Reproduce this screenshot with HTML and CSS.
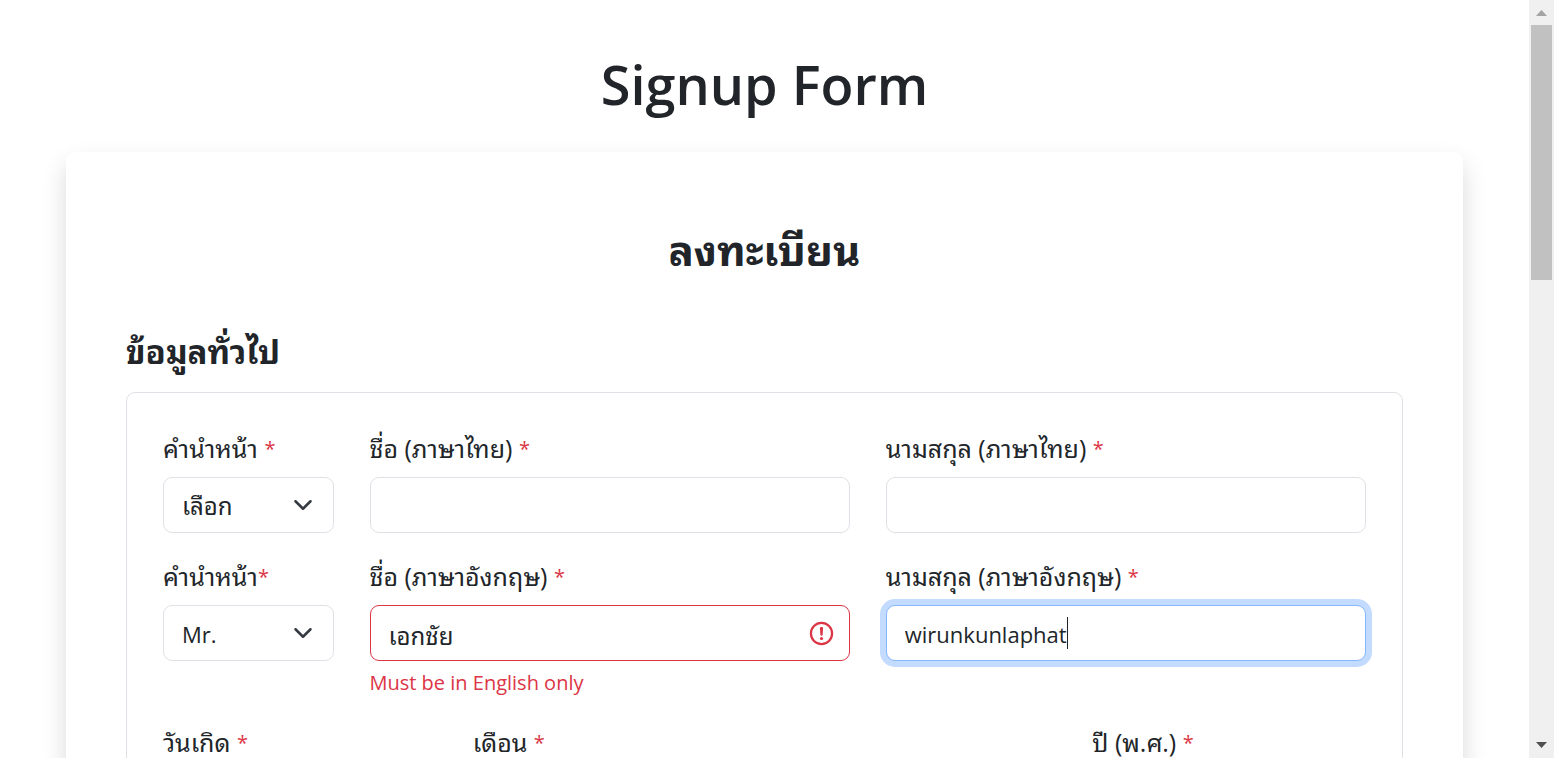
FILE: index.html
```html
<!DOCTYPE html>
<html lang="th">
<head>
<meta charset="utf-8">
<meta name="viewport" content="width=device-width, initial-scale=1">
<title>Signup Form</title>
<link rel="stylesheet" href="styles.css">
</head>
<body>
<div class="viewport">
  <main class="page">
    <h1 class="page-title">Signup Form</h1>
    <form class="card">
      <h2 class="card-title">ลงทะเบียน</h2>
      <h3 class="section-title">ข้อมูลทั่วไป</h3>
      <div class="panel">
        <div class="field span-2">
          <label for="prefix-th">คำนำหน้า <span class="req">*</span></label>
          <div class="control">
            <select id="prefix-th" class="input thai"><option>เลือก</option></select>
            <svg class="chevron" viewBox="0 0 16 16" aria-hidden="true"><path d="m2 5 6 6 6-6"/></svg>
          </div>
        </div>
        <div class="field span-5">
          <label for="first-th">ชื่อ (ภาษาไทย) <span class="req">*</span></label>
          <input id="first-th" class="input thai" type="text">
        </div>
        <div class="field span-5">
          <label for="last-th">นามสกุล (ภาษาไทย) <span class="req">*</span></label>
          <input id="last-th" class="input thai" type="text">
        </div>

        <div class="field span-2">
          <label for="prefix-en">คำนำหน้า<span class="req">*</span></label>
          <div class="control">
            <select id="prefix-en" class="input"><option>Mr.</option></select>
            <svg class="chevron" viewBox="0 0 16 16" aria-hidden="true"><path d="m2 5 6 6 6-6"/></svg>
          </div>
        </div>
        <div class="field span-5">
          <label for="first-en">ชื่อ (ภาษาอังกฤษ) <span class="req">*</span></label>
          <div class="control">
            <input id="first-en" class="input thai invalid" type="text" value="เอกชัย" aria-invalid="true" aria-describedby="first-en-error">
            <svg class="alert" viewBox="0 0 12 12" aria-hidden="true"><circle cx="6" cy="6" r="4.7"/><path d="M5.8 3.6h.4L6 6.500z"/><circle class="dot" cx="6" cy="8.2" r=".7"/></svg>
          </div>
          <p id="first-en-error" class="feedback">Must be in English only</p>
        </div>
        <div class="field span-5">
          <label for="last-en">นามสกุล (ภาษาอังกฤษ) <span class="req">*</span></label>
          <div class="control">
            <input id="last-en" class="input focused" type="text" value="wirunkunlaphat">
            <span class="caret"></span>
          </div>
        </div>

        <div class="field span-3">
          <label for="day">วันเกิด <span class="req">*</span></label>
          <select id="day" class="input"></select>
        </div>
        <div class="field span-6">
          <label for="month">เดือน <span class="req">*</span></label>
          <select id="month" class="input"></select>
        </div>
        <div class="field span-3">
          <label for="year">ปี (พ.ศ.) <span class="req">*</span></label>
          <select id="year" class="input"></select>
        </div>
      </div>
    </form>
  </main>
  <div class="scrollbar" aria-hidden="true">
    <svg class="arrow up" viewBox="0 0 25 25"><path d="M7 16 12.500 10 18 16z"/></svg>
    <div class="track"><div class="thumb"></div></div>
    <svg class="arrow down" viewBox="0 0 25 25"><path d="M7 9 12.500 15 18 9z"/></svg>
  </div>
</div>
</body>
</html>
```
FILE: styles.css
```css
* { box-sizing: border-box; }

body {
  margin: 0;
  color: #212529;
  background: #fff;
  font-family: "Segoe UI", "Open Sans", "Leelawadee UI", "Noto Sans Thai Looped", "Loma", "Waree", "Garuda", sans-serif;
  font-size: 22px;
  line-height: 36px;
}

h1, h2, h3, p { margin: 0; }

.viewport {
  display: flex;
  height: 100vh;
  overflow: hidden;
}

.page {
  flex: 1;
  min-width: 0;
  padding: 44px 66px 0;
}

.page-title {
  margin-bottom: 28px;
  font-size: 54px;
  font-weight: 600;
  line-height: 80px;
  text-align: center;
}

.card {
  padding: 70px 60px;
  border-radius: 9px;
  box-shadow: 0 12px 24px rgba(0, 0, 0, 0.15);
}

.card-title {
  margin-bottom: 54px;
  font-size: 42px;
  font-weight: 700;
  line-height: 56px;
  text-align: center;
}

.section-title {
  margin-bottom: 20px;
  font-size: 33px;
  font-weight: 700;
  line-height: 40px;
}

.panel {
  display: grid;
  grid-template-columns: repeat(12, minmax(0, 1fr));
  gap: 24px 36px;
  padding: 36px;
  border: 1px solid #dee2e6;
  border-radius: 9px;
}

.span-2 { grid-column: span 2; }
.span-3 { grid-column: span 3; }
.span-5 { grid-column: span 5; }
.span-6 { grid-column: span 6; }

.field label {
  display: block;
  height: 36px;
  margin-bottom: 12px;
  font-size: 25px;
  line-height: 38px;
  white-space: nowrap;
}

.req {
  color: #dc3545;
  font-size: 20px;
  line-height: 20px;
  vertical-align: 2px;
}

.control { position: relative; }

.input {
  display: block;
  width: 100%;
  height: 56px;
  padding: 2px 18px 0;
  border: 1px solid #dee2e6;
  border-radius: 9px;
  outline: 0;
  appearance: none;
  color: inherit;
  background: #fff;
  font: inherit;
}

.thai { font-size: 24px; }

.invalid { border-color: #dc3545; }

.focused {
  border-color: #86b7fe;
  box-shadow: 0 0 0 6px #c2dbfe;
}

.chevron {
  position: absolute;
  top: 18px;
  right: 21px;
  width: 20px;
  height: 20px;
  fill: none;
  stroke: #343a40;
  stroke-width: 2;
  stroke-linecap: round;
  stroke-linejoin: round;
  pointer-events: none;
}

.alert {
  position: absolute;
  top: 15px;
  right: 15px;
  width: 27px;
  height: 27px;
  fill: none;
  stroke: #dc3545;
  stroke-linejoin: round;
}

.alert .dot {
  fill: #dc3545;
  stroke: none;
}

.caret {
  position: absolute;
  top: 12px;
  left: 181px;
  width: 1px;
  height: 32px;
  background: #212529;
}

.feedback {
  margin-top: 6px;
  color: #dc3545;
  font-size: 20px;
  line-height: 32px;
}

.scrollbar {
  display: flex;
  flex-direction: column;
  width: 25px;
  background: #f0f0f0;
}

.arrow {
  display: block;
  width: 25px;
  height: 25px;
}

.up { fill: #a3a3a3; }
.down { fill: #505050; }

.track {
  flex: 1;
  padding: 0 2px;
}

.thumb {
  height: 36%;
  background: #c1c1c1;
}
```
